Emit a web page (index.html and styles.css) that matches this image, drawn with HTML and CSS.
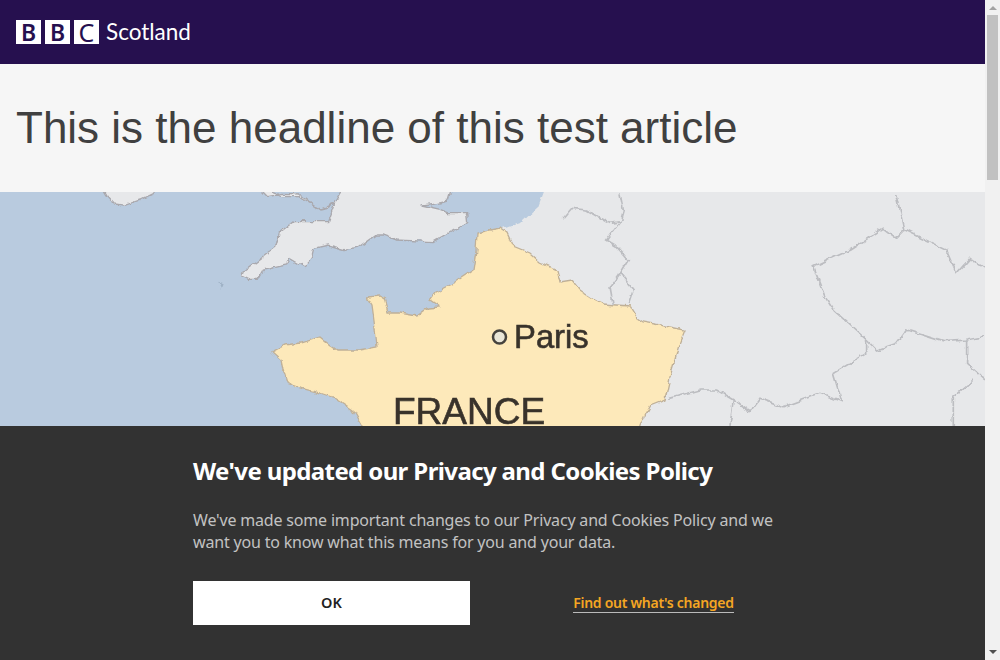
FILE: index.html
```html
<!DOCTYPE html>
<html lang="en">
<head>
<meta charset="utf-8">
<title>This is the headline of this test article</title>
<link rel="stylesheet" href="styles.css">
</head>
<body>
<div class="shell">
  <div class="page">
    <header class="masthead">
      <div class="logo">
        <span class="block">B</span><span class="block">B</span><span class="block block-c">C</span>
        <span class="region">Scotland</span>
      </div>
    </header>
    <section class="title-band">
      <h1 class="headline">This is the headline of this test article</h1>
    </section>
    <main class="article">
      <svg class="map" viewBox="0 192 985 554" role="img" aria-label="Map of France showing Paris">
        <defs>
          <filter id="rough" x="-5%" y="-5%" width="110%" height="110%">
            <feTurbulence type="fractalNoise" baseFrequency="0.11" numOctaves="3" seed="4" result="noise"/>
            <feDisplacementMap in="SourceGraphic" in2="noise" scale="6" xChannelSelector="R" yChannelSelector="G"/>
            <feGaussianBlur stdDeviation="0.75"/>
          </filter>
          <filter id="soft" x="-5%" y="-5%" width="110%" height="110%"><feGaussianBlur stdDeviation="0.45"/></filter>
        </defs>
        <rect class="land" x="0" y="192" width="985" height="554"/>
        <g filter="url(#rough)">
          <path class="sea" d="M0 185H546L538 207L522 222L500 230L470 280L420 330L440 560H-10V185Z"/>
          <g transform="translate(0 190) scale(.3333)">
            <path class="uk" d="M300 -20L320 14L345 42L375 46L420 30L462 10L462 -20ZM760 -20L800 20L850 10L900 12L960 60L985 55L1005 40L1040 -20H1360L1345 30L1300 40L1265 45L1320 58L1345 68L1400 68L1403 95L1360 120L1300 155L1190 150L1150 135L1130 135L1075 175L1040 180L985 165L942 175L935 205L915 232L870 205L860 225L790 240L775 268L745 268L725 258L730 245L770 215L830 170L842 125L880 95L985 95L1005 40L960 60L900 20L850 20Z"/>
            <path class="islet" d="M655 275L668 280L662 293Z"/>
          </g>
          <path class="france" d="M367 297L380 296L384 298L388 313L400 313L417 316L428 308L440 307L430 300L436 292L455 282L473 270L476 250L477 233L490 230L500 228L507 233L513 246L530 253L540 262L557 270L560 282L572 280L580 290L595 300L603 305L616 306L630 307L637 318L643 322L660 325L685 330L679 345L670 377L665 400L650 406L645 415L640 426L620 520L640 600L400 600L362 426L353 410L335 398L320 393L300 388L287 383L283 370L281 360L272 352L285 345L300 343L320 337L330 345L337 350L360 350L377 347L374 320L372 305Z"/>
          <g transform="translate(500 190) scale(.3333)" class="borders">
            <path d="M190 85L215 55L260 60L330 100L360 95L370 60L360 10"/>
            <path d="M360 95L320 150L345 165L385 210L360 250L330 290L340 345"/>
            <path d="M360 250L400 300L385 345"/>
            <path d="M1190 10L1215 120L1190 145L1150 115L1050 180L940 230L975 320L1000 360L1100 450L1130 480L1190 460L1220 420L1330 455L1400 450L1455 440"/>
            <path d="M1215 120L1340 180L1370 250L1410 205L1455 235"/>
            <path d="M1100 450L1100 490L1000 550L1025 635L960 610L850 650L780 625L750 665L700 630L650 600L600 600L510 625"/>
            <path d="M1400 450L1400 520L1455 570M1360 708L1360 620L1420 570"/>
            <path d="M700 630L690 708"/>
          </g>
        </g>
        <g filter="url(#soft)">
          <circle class="city" cx="499.500" cy="337" r="6.500"/>
          <text class="label-paris" x="514" y="348">Paris</text>
          <text class="label-france" x="393" y="424">FRANCE</text>
        </g>
      </svg>
    </main>
    <aside class="cookie-banner">
      <div class="cookie-inner">
        <h2 class="cookie-title">We've updated our Privacy and Cookies Policy</h2>
        <p class="cookie-text">We've made some important changes to our Privacy and Cookies Policy and we want you to know what this means for you and your data.</p>
        <div class="cookie-actions">
          <button class="ok-button" type="button">OK</button>
          <div class="link-cell"><a class="change-link" href="#">Find out what's changed</a></div>
        </div>
      </div>
    </aside>
  </div>
  <div class="scrollbar" aria-hidden="true">
    <span class="arrow-up"></span>
    <div class="track"><div class="thumb"></div></div>
    <span class="arrow-down"></span>
  </div>
</div>
</body>
</html>
```
FILE: styles.css
```css
html, body {
  margin: 0;
  padding: 0;
  height: 100%;
  overflow: hidden;
}

body {
  background: #fff;
  font-family: "Liberation Sans", Arial, sans-serif;
}

.shell {
  display: flex;
  height: 660px;
}

.page {
  position: relative;
  flex: 1;
  min-width: 0;
  overflow: hidden;
}

.scrollbar {
  width: 15px;
  background: #f1f1f1;
  display: flex;
  flex-direction: column;
  align-items: center;
}

.arrow-up,
.arrow-down {
  width: 0;
  height: 0;
  border-left: 4px solid transparent;
  border-right: 4px solid transparent;
}

.arrow-up {
  margin: 6px 0 5px;
  border-bottom: 4px solid #a3a3a3;
}

.arrow-down {
  margin: 5px 0 6px;
  border-top: 4px solid #505050;
}

.track {
  flex: 1;
  width: 100%;
  padding: 0 2px;
  box-sizing: border-box;
}

.thumb {
  height: 165px;
  background: #c1c1c1;
}

.masthead {
  height: 64px;
  background: #26104f;
  display: flex;
  align-items: center;
  padding-left: 16px;
}

.logo {
  display: flex;
  align-items: center;
  gap: 4px;
}

.block {
  width: 25px;
  height: 24px;
  background: #fff;
  color: #26104f;
  font: 600 23px/24px "Noto Sans", sans-serif;
  text-align: center;
}

.block-c {
  font-weight: 400;
  font-size: 25px;
}

.region {
  margin-left: 3px;
  color: #fff;
  font: 400 22.500px/24px Lato, "Noto Sans", sans-serif;
}

.title-band {
  height: 128px;
  background: #f6f6f6;
  display: flex;
  align-items: center;
  padding-left: 16px;
}

.headline {
  margin: 0;
  color: #404040;
  font: 400 44px/52px "Liberation Sans", Arial, sans-serif;
}

.map {
  display: block;
  width: 985px;
  height: 554px;
}

.land { fill: #e7e8ea; }
.sea { fill: #b9cbdf; }
.uk { fill: #e7e8ea; stroke: #a9a8ad; stroke-width: 4; }
.islet { fill: #9fb2c6; }
.france { fill: #fde9ba; stroke: #bfb098; stroke-width: 1.300; }
.borders { fill: none; stroke: #bcbdc1; stroke-width: 5; }
.city { fill: #e9e6d8; stroke: #44423e; stroke-width: 2.500; }

.label-paris,
.label-france {
  fill: #38322c;
  stroke: #38322c;
  stroke-width: 0.600;
  font-family: "Liberation Sans", Arial, sans-serif;
}

.label-paris { font-size: 32.800px; }
.label-france { font-size: 37px; }

.cookie-banner {
  position: absolute;
  left: 0;
  right: 0;
  bottom: 0;
  height: 234px;
  background: #323232;
}

.cookie-inner {
  width: 599px;
  margin: 0 auto;
  padding-top: 29px;
}

.cookie-title {
  margin: 0;
  color: #fff;
  font: 700 24px/32px "Noto Sans", sans-serif;
  letter-spacing: -0.620px;
}

.cookie-text {
  margin: 22px 0 0;
  color: #c2c2c2;
  font: 400 16px/22px "Noto Sans", sans-serif;
  letter-spacing: -0.180px;
}

.cookie-actions {
  display: grid;
  grid-template-columns: 277px 277px;
  gap: 45px;
  margin-top: 28px;
  align-items: center;
}

.ok-button {
  height: 44px;
  border: 0;
  padding: 0 0 2px;
  background: #fff;
  color: #222;
  font: 600 14.500px/20px "Noto Sans", sans-serif;
}

.link-cell {
  text-align: center;
}

.change-link {
  color: #f5a623;
  font: 600 14px/20px "Noto Sans", sans-serif;
  letter-spacing: -0.280px;
  text-decoration: none;
  border-bottom: 1px solid #bbb;
}
```
